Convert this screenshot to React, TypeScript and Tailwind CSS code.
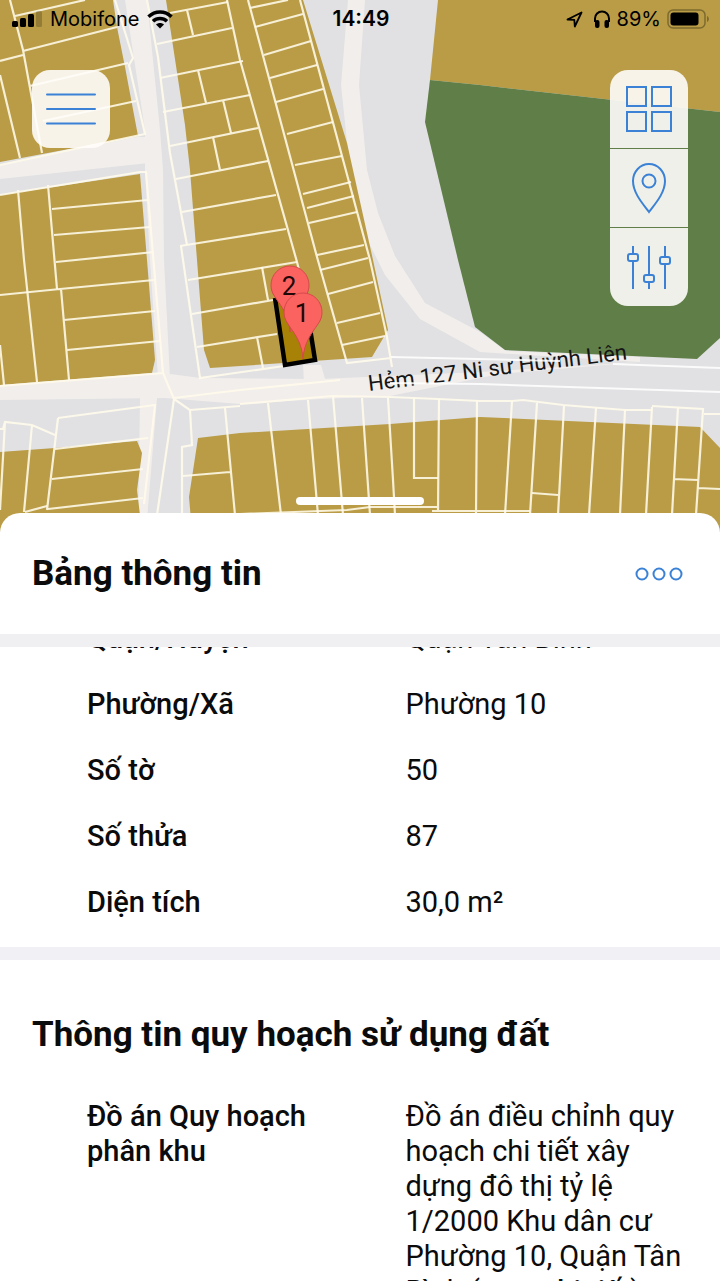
import React, { FC, ReactNode, useLayoutEffect, useRef } from 'react';

interface InfoRow {
  label: string;
  value: ReactNode;
}

const parcelRows: InfoRow[] = [
  { label: 'Quận/Huyện', value: 'Quận Tân Bình' },
  { label: 'Phường/Xã', value: 'Phường 10' },
  { label: 'Số tờ', value: '50' },
  { label: 'Số thửa', value: '87' },
  { label: 'Diện tích', value: '30,0 m²' },
];

const planningRows: InfoRow[] = [
  {
    label: 'Đồ án Quy hoạch phân khu',
    value: (
      <>
        Đồ án điều chỉnh quy hoạch chi tiết xây dựng đô thị tỷ lệ 1/2000 Khu dân cư Phường 10, Quận Tân
        Bình (<a href="#detail" className="font-medium">xem chi tiết</a>)
      </>
    ),
  },
];

// the list opens scrolled past the top of the first row
const INITIAL_SCROLL = 58;

const ROADS = [
  'M125 0H147L160 130L163 170L164 260L170 378H158L150 260L145 170L145 130Z',
  'M0 165L137 137H158V162L0 179Z',
  'M0 385L163 373L200 378L320 379L480 372L640 362L500 374L390 396L320 399L240 404L165 398L0 400Z',
  'M140 398H157L146 532H138Z',
  'M348 0H365L359 85L367 170L378 213L395 256L425 303L480 332L506 351L640 357L640 362L480 352L420 319L385 275L360 225L350 170L341 85Z',
  'M303 365H321L326 382H304Z',
];

const BLOCKS = [
  'M0 0H113L117 27L125 67L138 136L0 162Z',
  'M0 195L140 174L147 260L155 360L152 373L0 385Z',
  'M166 0H303L347 143L373 260L388 330L372 357L210 368L204 350L197 260L190 170L185 125Z',
  'M438 0H720V112L480 85L430 80Z',
  'M0 452L55 448L137 441L142 453L137 490L142 532H0Z',
  'M198 438L240 433L390 424L480 417L700 427L720 448V532H192L189 497Z',
];

const LOT_LINES = [
  // north west
  'M10 0L23 50L42 153M0 61L23 55M0 75L20 158M15 16L85 0M23 51L117 27M30 86L128 63M43 121L136 101',
  'M115 0L133 58L129 65L145 134L0 165',
  // west
  'M0 195L140 172H146L163 373L0 386M18 190L24 260L37 382M48 185L57 289M52 209L148 200M54 235L150 227',
  'M56 262L154 252M0 295L60 289L154 280M61 289L69 380M64 320L155 311M67 350L160 341M0 345L4 385',
  // centre
  'M147 0L158 57L170 153L187 245M181 246L200 378L284 366M227 0L240 60L297 262L304 290',
  'M170 13L228 2M187 10L193 35M157 44L232 28M160 78L243 61M198 70L206 103M163 112L250 95M223 100L231 133',
  'M170 146L258 128M213 137L220 170M176 179L268 161M182 212L276 195M180 246L286 229M188 280L297 262',
  'M192 314L273 300M197 347L277 334M262 267L268 300M257 337L263 368',
  'M248 0L317 257L347 363L391 358M300 0L370 260L387 337L392 367',
  'M250 8L288 0M255 27L303 14M264 55L311 41M270 78L317 65M276 102L323 89M287 134L333 122M295 165L342 156',
  'M303 194L351 182M307 208L354 196M309 223L357 212M317 255L364 245M320 270L368 258M328 294L373 282',
  'M337 323L380 313M342 345L385 336',
  // south west
  'M0 429H3L5 422L32 425L55 435M5 422L0 510M32 425L24 512M58 418L47 510M58 418L155 405L144 504',
  'M55 449L148 438M52 479L143 469M48 509L143 498M25 512L47 506',
  // south
  'M163 373L174 399L190 410L192 445L182 447V515M174 399L157 515M190 410L240 406M174 398L240 390L340 380',
  'M225 408L235 515M183 476L230 472M240 404L332 396L390 397L438 399L480 401L512 401L523 400L563 405L625 410H652',
  'M268 403L281 515M308 400L318 515M333 396L343 515M362 398L370 515M388 398L393 480L395 515M414 398V478H438',
  'M439 399L438 512M477 400L476 515M240 514L347 510L370 507H438M432 511H530',
  'M512 401L505 515M537 403L530 515M564 406L558 515M596 408L589 515M625 410L620 515M652 407L646 515',
  'M652 406L703 409L696 515M678 407L672 515M532 493L558 495M673 479L698 480M698 488L720 489M704 414H720',
];

const ROAD_LINES = 'M391 357L560 361M390 383L480 384L720 392M613 364L720 368';

const ParcelMap: FC = () => (
  <svg
    className="absolute inset-0 h-full w-full"
    viewBox="0 0 720 532"
    preserveAspectRatio="xMidYMin slice"
    role="img"
    aria-label="Bản đồ quy hoạch"
  >
    <rect width="720" height="532" fill="#e1e1e3" />
    {ROADS.map((d) => (
      <path key={d} d={d} fill="#f2eeeb" />
    ))}
    {BLOCKS.map((d) => (
      <path key={d} d={d} fill="#b99c45" />
    ))}
    <path d="M430 80L425 122L458 260L475 327L505 350L697 359L720 338V112L480 85Z" fill="#607e47" />
    <g fill="none" stroke="#fffaea" strokeOpacity="0.88" strokeWidth="2.2">
      {LOT_LINES.map((d) => (
        <path key={d} d={d} />
      ))}
    </g>
    <text
      x="369"
      y="391"
      transform="rotate(-7 369 391)"
      fontFamily="Roboto, sans-serif"
      fontSize="22"
      fill="#151515"
    >
      Hẻm 127 Ni sư Huỳnh Liên
    </text>
    <path d={ROAD_LINES} fill="none" stroke="#ffffff" strokeOpacity="0.85" strokeWidth="2" />
    <path d="M275 298L284 366L316 360L308 310Z" fill="#a88206" />
    <path d="M275 298L285 365L315 360L309 322" fill="none" stroke="#000000" strokeWidth="4.5" />
    <MapPin x={290} y={285} label="2" />
    <MapPin x={303} y={312} label="1" />
  </svg>
);

const MapPin: FC<{ x: number; y: number; label: string }> = ({ x, y, label }) => (
  <g transform={`translate(${x} ${y})`}>
    <path
      d="M0 47C-1 30 -9 21 -15 12C-18 8 -19 4 -19 0A19 19 0 0 1 19 0C19 4 18 8 15 12C9 21 1 30 0 47Z"
      fill="#fb6361"
      stroke="#d5494a"
      strokeWidth="1"
    />
    <text x="-1" y="10" textAnchor="middle" fontFamily="Roboto, sans-serif" fontSize="26" fill="#1f0808">
      {label}
    </text>
  </g>
);

const StatusBar: FC = () => (
  <div className="grid h-[38px] grid-cols-[1fr_auto_1fr] items-center pl-3 pr-2.5 font-[Inter,sans-serif] text-xl text-black">
    <div className="flex items-center gap-2">
      <svg width="30" height="16" viewBox="0 0 30 16" aria-hidden="true">
        <rect x="0" y="10" width="6" height="6" rx="1.5" />
        <rect x="8" y="7" width="6" height="9" rx="1.5" />
        <rect x="16" y="3" width="6" height="13" rx="1.5" />
        <rect x="24" y="0" width="6" height="16" rx="1.5" opacity="0.2" />
      </svg>
      <span>Mobifone</span>
      <svg width="26" height="19" viewBox="0 0 26 19" fill="none" stroke="currentColor" strokeWidth="3.5" aria-hidden="true">
        <path d="M1.5 6.8C8 0.4 18 0.4 24.5 6.8" />
        <path d="M6 11.3C10 7.5 16 7.5 20 11.3" />
        <path d="M13 18.5L9 14.5C11.3 12.5 14.7 12.5 17 14.5Z" fill="currentColor" stroke="none" />
      </svg>
    </div>
    <span className="text-[21px] font-semibold">14:49</span>
    <div className="flex items-center justify-end gap-1.5">
      <svg width="17" height="17" viewBox="0 0 17 17" fill="none" stroke="currentColor" strokeWidth="1.8" strokeLinejoin="round" aria-hidden="true">
        <path d="M1.5 8.5L15.5 1.5L8.8 15.5L8.3 8.8Z" />
      </svg>
      <svg className="ml-1" width="18" height="18" viewBox="0 0 18 18" aria-hidden="true">
        <path d="M2 12V8.5A7 7 0 0 1 16 8.5V12" fill="none" stroke="currentColor" strokeWidth="2" />
        <rect x="2" y="10" width="4.5" height="8" rx="2" />
        <rect x="11.5" y="10" width="4.5" height="8" rx="2" />
      </svg>
      <span>89%</span>
      <svg width="43" height="20" viewBox="0 0 43 20" aria-hidden="true">
        <rect x="1" y="1" width="37" height="18" rx="5" fill="none" stroke="#7d6a2e" strokeWidth="1.5" />
        <rect x="3.5" y="3.5" width="28" height="13" rx="3" />
        <path d="M40 7C42.5 8 42.5 12 40 13Z" fill="#7d6a2e" />
      </svg>
    </div>
  </div>
);

const ToolButton: FC<{ label: string; children: ReactNode }> = ({ label, children }) => (
  <button type="button" aria-label={label} className="flex h-[78px] w-[78px] items-center justify-center bg-[#fffdfb]/90">
    <svg width="50" height="52" viewBox="0 0 50 52" fill="none" stroke="#3b82d6" strokeWidth="2">
      {children}
    </svg>
  </button>
);

const InfoList: FC<{ rows: InfoRow[] }> = ({ rows }) => (
  <dl className="flex flex-col gap-[31px] pl-[87px] pr-8 text-[29px] leading-[35px]">
    {rows.map((row) => (
      <div key={row.label} className="grid grid-cols-[53%_47%]">
        <dt className="pr-16 font-medium">{row.label}</dt>
        <dd>{row.value}</dd>
      </div>
    ))}
  </dl>
);

const App: FC = () => {
  const listRef = useRef<HTMLDivElement>(null);

  useLayoutEffect(() => {
    if (listRef.current) listRef.current.scrollTop = INITIAL_SCROLL;
  }, []);

  return (
    <main className="flex h-screen flex-col overflow-hidden bg-white font-[Roboto,sans-serif] text-[#0b0b0b]">
      <section className="relative h-[532px] shrink-0">
        <ParcelMap />
        <div className="relative flex h-full flex-col">
          <StatusBar />
          <div className="flex items-start justify-between px-8 pt-8">
            <div className="overflow-hidden rounded-[18px]">
              <ToolButton label="Menu">
                <path d="M1 11.5H49M1 26H49M1 40.5H49" strokeLinecap="round" />
              </ToolButton>
            </div>
            <div className="flex flex-col gap-px overflow-hidden rounded-[18px]">
              <ToolButton label="Lớp bản đồ">
                <path d="M3 4H22V23H3ZM28 4H47V23H28ZM3 29H22V48H3ZM28 29H47V48H28Z" />
              </ToolButton>
              <ToolButton label="Vị trí">
                <path d="M25 50C19 42 9 31 9 19A16 17 0 0 1 41 19C41 31 31 42 25 50Z" />
                <circle cx="25" cy="19" r="6.5" />
              </ToolButton>
              <ToolButton label="Bộ lọc">
                <path d="M9 5V13M9 20V48M25 5V34M25 41V48M41 5V16M41 23V48" />
                <rect x="4" y="13" width="10" height="7" rx="2" />
                <rect x="20" y="34" width="10" height="7" rx="2" />
                <rect x="36" y="16" width="10" height="7" rx="2" />
              </ToolButton>
            </div>
          </div>
          <div className="mx-auto mb-[27px] mt-auto h-2 w-32 rounded-full bg-white" />
        </div>
      </section>

      <section className="relative -mt-[19px] flex min-h-0 flex-1 flex-col rounded-t-[20px] bg-white">
        <header className="flex h-[121px] shrink-0 items-center justify-between pl-8 pr-9">
          <h1 className="text-[35px] font-bold leading-10">Bảng thông tin</h1>
          <button type="button" aria-label="Thêm">
            <svg width="50" height="16" viewBox="0 0 50 16" fill="none" stroke="#3b82d6" strokeWidth="2">
              <circle cx="8" cy="8" r="5.5" />
              <circle cx="25" cy="8" r="5.5" />
              <circle cx="42" cy="8" r="5.5" />
            </svg>
          </button>
        </header>
        <div className="h-[13px] shrink-0 bg-[#f0f0f2]" />
        <div ref={listRef} className="min-h-0 flex-1 overflow-y-auto [scrollbar-width:none]">
          <div className="pb-[27px] pt-8">
            <InfoList rows={parcelRows} />
          </div>
          <div className="h-[13px] bg-[#f0f0f5]" />
          <div className="pb-16 pt-[55px]">
            <h2 className="mb-11 px-8 text-[35px] font-bold leading-10">Thông tin quy hoạch sử dụng đất</h2>
            <InfoList rows={planningRows} />
          </div>
        </div>
      </section>
    </main>
  );
};

export default App;
